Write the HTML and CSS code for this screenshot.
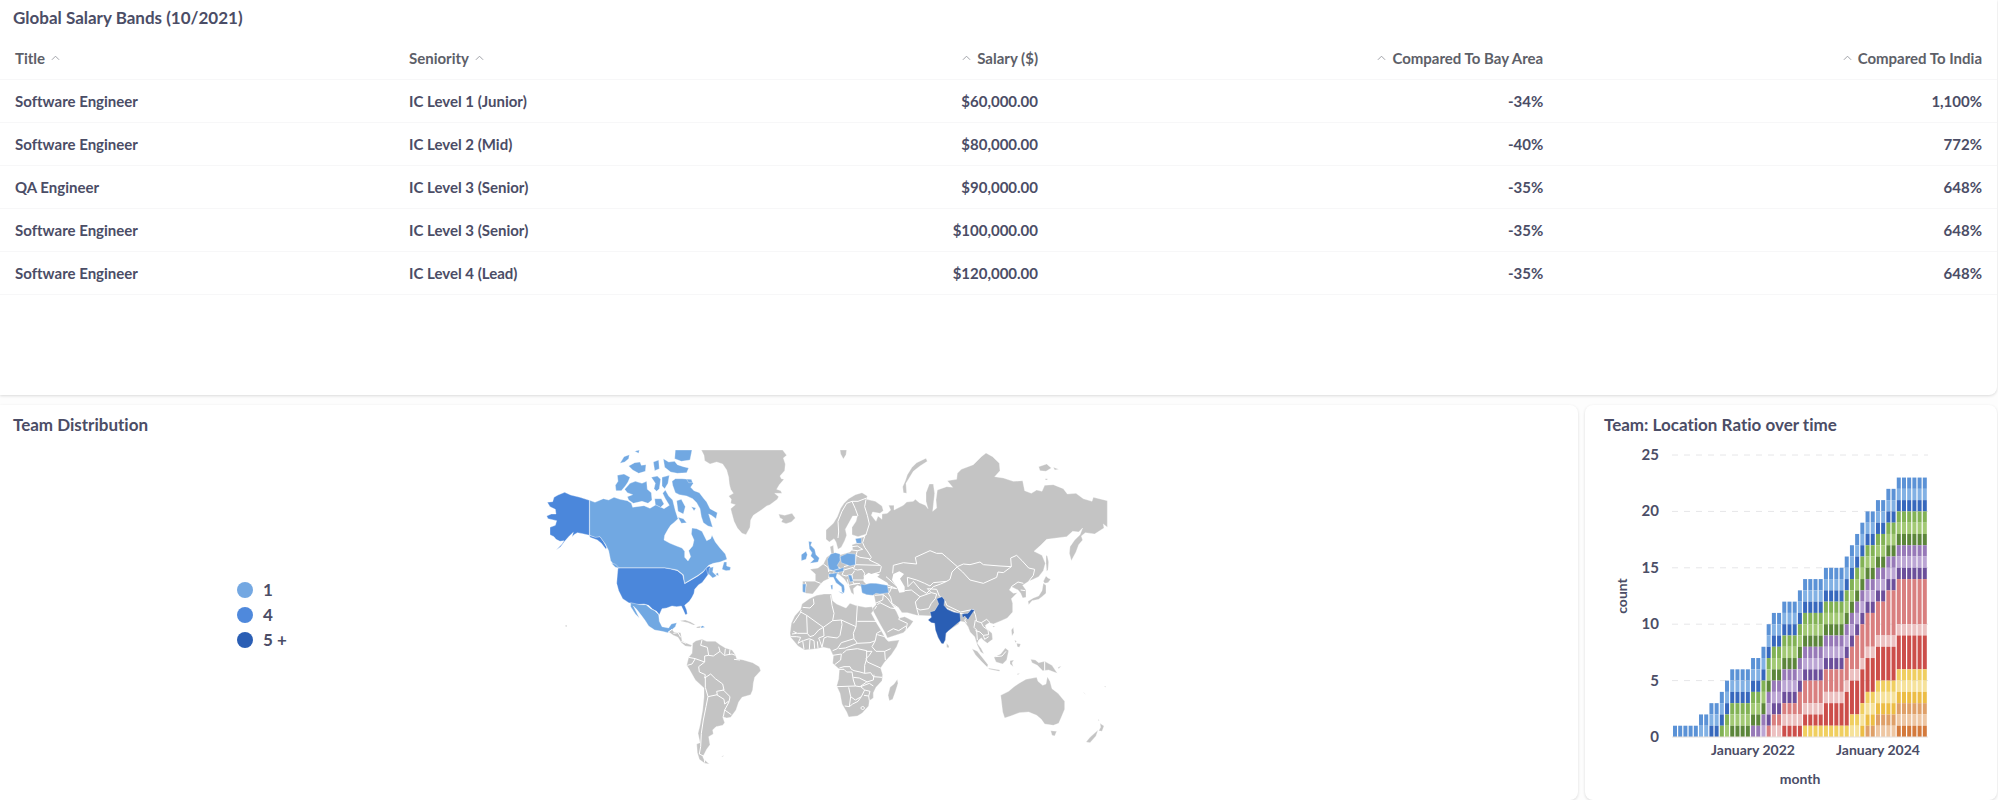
FILE: index.html
```html
<!DOCTYPE html>
<html lang="en">
<head>
<meta charset="utf-8">
<title>Team dashboard</title>
<link rel="stylesheet" href="styles.css">
</head>
<body>
<main class="dashboard">
  <section class="card card-salary">
    <h2 class="card-title">Global Salary Bands (10/2021)</h2>
    <table class="bands">
      <colgroup><col class="col-title"><col class="col-seniority"><col class="col-salary"><col class="col-bay"><col class="col-india"></colgroup>
      <thead>
        <tr>
          <th scope="col"><button class="sort" type="button">Title<svg class="caret" viewBox="0 0 10 6" aria-hidden="true"><path d="M1 5L5 1L9 5"/></svg></button></th>
          <th scope="col"><button class="sort" type="button">Seniority<svg class="caret" viewBox="0 0 10 6" aria-hidden="true"><path d="M1 5L5 1L9 5"/></svg></button></th>
          <th scope="col" class="num"><button class="sort" type="button"><svg class="caret" viewBox="0 0 10 6" aria-hidden="true"><path d="M1 5L5 1L9 5"/></svg>Salary ($)</button></th>
          <th scope="col" class="num"><button class="sort" type="button"><svg class="caret" viewBox="0 0 10 6" aria-hidden="true"><path d="M1 5L5 1L9 5"/></svg>Compared To Bay Area</button></th>
          <th scope="col" class="num"><button class="sort" type="button"><svg class="caret" viewBox="0 0 10 6" aria-hidden="true"><path d="M1 5L5 1L9 5"/></svg>Compared To India</button></th>
        </tr>
      </thead>
      <tbody>
        <tr><td>Software Engineer</td><td>IC Level 1 (Junior)</td><td class="num">$60,000.00</td><td class="num">-34%</td><td class="num">1,100%</td></tr>
        <tr><td>Software Engineer</td><td>IC Level 2 (Mid)</td><td class="num">$80,000.00</td><td class="num">-40%</td><td class="num">772%</td></tr>
        <tr><td>QA Engineer</td><td>IC Level 3 (Senior)</td><td class="num">$90,000.00</td><td class="num">-35%</td><td class="num">648%</td></tr>
        <tr><td>Software Engineer</td><td>IC Level 3 (Senior)</td><td class="num">$100,000.00</td><td class="num">-35%</td><td class="num">648%</td></tr>
        <tr><td>Software Engineer</td><td>IC Level 4 (Lead)</td><td class="num">$120,000.00</td><td class="num">-35%</td><td class="num">648%</td></tr>
      </tbody>
    </table>
  </section>

  <div class="row">
    <section class="card card-map">
      <h2 class="card-title">Team Distribution</h2>
      <div class="map-body">
        <ul class="legend">
          <li><span class="dot level-1"></span>1</li>
          <li><span class="dot level-4"></span>4</li>
          <li><span class="dot level-5"></span>5 +</li>
        </ul>
        <svg class="map" viewBox="0 0 1710 972" role="img" aria-label="World map of team members">
          <!-- North America -->
          <g class="country level-4">
            <path d="M22 187L38 185L42 172L54 165L74 157L92 165L120 172L148 181V286L128 281L112 278L102 284L96 291L100 277L88 288L74 304L62 320L48 330L66 312L72 302L60 304L48 298L42 290L30 284L30 262L46 256L50 242L24 236L20 228L34 222L48 222L46 208L30 200Z"/>
            <path d="M148 286L166 291L180 290L190 304L200 322L198 328L184 310L172 300L150 292Z"/>
            <path d="M234 384H374L392 387L412 392L428 405L434 431L450 422L474 408L490 396L498 384L506 380L504 404L494 418L486 428L476 434L464 448L462 460L456 472L448 484L434 496L440 510L442 522L436 524L430 510L424 498L410 500L396 498L380 504L366 506L358 524L350 514L338 508L326 496L312 492L290 494L266 488L248 476L236 452L230 430L232 404Z"/>
            <path d="M498 384L508 378L518 390L504 404Z"/>
          </g>
          <g class="country level-1">
            <path d="M149 181L165 187L190 176L206 180L222 172L240 178L262 182L274 190L278 202L290 200L312 197L330 205L348 194L372 206L388 196L376 176L368 160L376 150L386 168L398 180L406 212L414 236L404 246L392 256L384 268L374 286L372 300L390 310L410 318L426 324L434 334L434 352L444 363L452 350L446 332L458 318L462 300L454 282L456 264L470 266L486 274L494 290L500 302L512 296L516 286L526 306L540 324L556 342L561 358L540 366L520 370L506 376L490 394L474 406L450 420L434 430L430 404L412 390L392 386L374 383H236L226 380L212 362L206 332L196 312L180 290L166 292L149 286Z"/>
            <path d="M508 384L520 380L518 396L530 408L518 414L506 402ZM536 408L526 402L534 398ZM546 388L552 366L560 366L560 378L572 382L570 391L558 392ZM214 370L226 372L238 384L226 382Z"/>
            <path d="M228 152L226 136L234 124L232 106L252 102L270 112L264 126L256 138L244 152Z"/>
            <path d="M254 148L270 130L286 124L306 130L320 124L322 148L334 158L336 180L324 190L306 184L280 190L266 180L262 170L278 164L262 158Z"/>
            <path d="M240 70L252 50L268 44L266 56L254 66ZM284 34L298 30L296 40ZM266 78L284 68L300 66L304 76L318 74L316 94L296 100L278 90Z"/>
            <path d="M340 66L356 60L358 86L344 92ZM370 56L386 66L404 64L412 74L430 80L446 84L440 98L412 100L392 96L374 82ZM406 30H456L450 60L424 64L404 56Z"/>
            <path d="M334 112L352 108L362 118L358 146L350 154L342 146L346 130ZM366 112L388 106L384 130L374 146L366 138ZM344 176L364 176L372 192L362 202L346 194Z"/>
            <path d="M398 136L396 124L406 116L426 116L448 118L460 130L452 142L462 152L478 158L490 174L500 186L510 206L532 218L528 236L514 226L506 222L518 262L504 258L490 248L484 230L480 206L470 188L458 176L440 168L418 164L406 158Z"/>
            <path d="M410 182L424 178L436 200L430 222L414 214ZM414 232L430 236L440 248L424 250ZM454 200L468 204L462 212Z"/>
            <path d="M440 118H454L458 128L446 128Z"/>
          </g>
          <g transform="translate(0 480)">
            <path class="country level-1" d="M272 8L300 14L318 14L332 26L344 32L356 44L358 64L366 80L386 84L394 72L410 68L406 80L392 92L384 98L366 94L344 90L326 78L316 62L304 46L290 28L280 18L288 34L298 54L286 42L272 20Z"/>
            <path class="country level-1" d="M482 80L488 77L495 82L484 84Z"/>
            <g class="country level-0">
              <path d="M386 96L396 88L402 96L422 98L426 122L440 130L456 136L452 140L436 138L424 128L414 112L400 106Z"/>
              <path d="M420 62L436 60L452 66L466 74L460 75L444 68L424 64ZM472 80L482 78L480 84H468ZM76 76L80 75L81 80L77 80ZM544 470L551 466L549 470Z"/>
              <path d="M458 130L468 122L486 118L500 124L526 124L540 134L556 144L576 150L586 164L590 176L610 180L638 188L658 200L662 212L644 232L640 250L638 270L632 284L606 292L596 306L588 330L572 352L560 354L548 350L554 368L548 376L528 380L518 390L520 402L506 410L510 434L500 448L494 460L488 470L494 480L508 492L494 490L478 478L472 458L470 432L480 428L474 400L480 376L488 330L492 290L492 264L466 240L448 208L440 196L446 172L456 160Z"/>
            </g>
            <path class="borders" d="M384 97L396 88M400 100L414 98L422 112M424 124L438 130M486 120L482 136L502 142L506 166L494 168L494 186L476 200L478 216L496 224L494 234L512 222L526 236L548 252L552 270L530 274L532 284L504 290L496 262L496 230M446 172L466 176L456 192L442 196M466 176L494 186M506 166L520 168L540 154L536 140M540 154L552 166L576 162L586 166M556 146L554 164M570 148L568 164M530 284L552 298L554 312L568 302L570 290L548 268M568 304L554 330L550 350M554 330L574 344M504 290L498 320L490 360L484 400L482 440L478 462L494 470M492 470L494 488M582 178L600 180"/>
          </g>
          <!-- Greenland and Iceland -->
          <g class="country level-0">
            <path d="M484 30H728L740 46L730 54L736 72L734 92L720 108L724 116L732 118L718 134L710 148L722 152L726 160L704 160L716 170L712 178L690 194L680 198L664 210L640 226L632 240L630 262L618 284L606 280L592 264L582 244L576 222L572 206L586 194L572 190L574 178L566 168L580 160L572 148L568 132L566 112L560 90L548 72L530 66L510 72L494 62L492 46Z"/>
            <path d="M716 222L734 226L756 220L766 234L754 246L738 251L724 246L728 238L720 234Z"/>
          </g>
          <!-- Europe and Asia -->
          <g transform="translate(690 0)">
            <g class="country level-0">
              <path d="M168 270L190 250L202 230L212 205L222 190L236 176L256 164L276 158L292 168L290 178L316 184L336 198L340 212L330 220L308 216L304 226L318 244L324 228L336 238L336 222L352 220L362 210L356 196L372 196L372 210L400 196L410 186L430 184L436 178L448 188L466 196L474 206L468 184L468 158L478 132L490 132L494 160L488 214L500 204L498 180L502 150L530 140L548 142L532 122L560 118L562 100L574 88L610 74L634 50L648 39L668 50L688 70L690 92L674 110L700 114L730 124L758 122L764 152L784 160L800 150L816 154L824 136L850 134L880 146L892 162L918 160L940 176L966 184L970 172L1012 182V262L1000 252L1002 264L974 282L946 278L934 288L938 300L926 314L918 336L904 362L898 340L900 320L914 300L930 284L938 264L926 276L908 274L890 290L860 294L830 298L812 316L792 334L816 346L826 370L820 392L806 410L790 418L776 424L758 436L768 450L768 472L758 474L752 460L744 450L736 446L724 440L718 450L730 460L742 458L724 476L728 490L728 516L712 534L694 542L670 552L658 548L646 556L648 564L666 580L668 598L652 610L642 602L634 594L626 600L622 610L634 626L642 642L632 636L622 616L614 590L600 576L594 560L584 546L570 544L566 552L530 576L526 602L516 612L504 594L496 560L486 528L440 526L412 518L396 518L386 504L368 496L380 516L388 534L404 530L412 534L430 544L420 558L400 578L352 594L346 580L330 552L316 526L306 506L318 494L312 466L300 466L278 460L274 440L262 436L250 446L252 464L244 458L236 436L222 416L208 404L190 398L176 416L160 424L152 432L138 450L128 462L108 460L98 452V424L136 424V402L120 388L144 384L160 372L170 352L184 342L180 320L190 316L192 338L212 344L240 336L248 328L246 314L260 310L258 296L284 290L290 282L264 290L246 284L246 262L258 244L262 228L248 228L236 250L226 268L230 286L224 302L214 322L204 328L198 306L192 296L178 306L168 298Z"/>
              <path d="M210 30H230L228 44L220 57L212 42ZM400 158L398 140L406 122L412 104L426 82L440 68L468 55L472 64L450 78L430 94L414 120L408 130L410 160ZM806 80L830 72L844 84L828 94L810 92ZM850 82L866 88L854 90ZM826 116H832V120H826ZM828 346L832 348L836 366L834 390L830 394L828 370ZM820 424L828 408L834 414L842 418L834 428L824 430ZM774 484L790 474L806 468L816 452L820 430L828 436L828 460L816 470L806 478L786 482L776 494ZM724 570L730 562L732 578L726 588ZM530 610L537 618L536 624L530 622Z"/>
            </g>
            <path class="sea" d="M280 424L282 408L296 398L304 402L316 398L330 404L322 410L352 428L356 436L330 436L306 430L288 432ZM370 402L388 394L402 402L390 416L404 440L404 456L388 458L380 440L366 420Z"/>
            <path class="borders" d="M204 294L206 276L204 244L216 214L230 190L246 184L264 184L290 174M264 228L256 206L246 184M288 178L284 200L292 226L298 252L288 284M284 290L278 308L284 322L294 336L304 352L298 360L328 374L334 380L330 396L316 400M260 310L274 308M246 320L262 318L278 328L262 332L258 346M246 330L262 332M258 346L270 352L298 356L298 360M258 346L256 374L250 386L262 390L276 388L284 400L282 410M256 374L330 376M160 372L174 382L176 396M180 398L176 414M136 424L152 430M106 426L108 434L104 458M204 382L222 390L250 382M222 392L216 404L228 408L246 404L254 392M246 404L248 420L282 420M248 424L252 432L270 430M232 418L236 436L262 430M174 390L204 394L206 400M222 380L236 376M348 410L378 436M346 432L380 446L354 442M358 458L366 440M368 400L370 376L400 368L440 372L436 352L480 332L500 340L516 340L530 352L562 380L546 396L540 418L530 424L490 428L480 438L464 430L440 420L412 412L414 440L430 424L450 448L470 460L490 440L512 432L530 424M562 380L580 372L600 374L630 366L640 374L690 378L724 380L700 398L684 396L680 412L640 430L600 420L578 396L562 382M724 380L722 354L740 346L756 362L776 384L794 388L790 406L776 424M724 440L744 426L760 430M752 450L766 452M404 452L424 450L450 470L436 486L440 504L446 526M450 470L484 458L500 462L496 476L484 490L476 506L450 510L440 504M484 458L472 446L500 448L508 468M508 468L526 484L530 496L572 516L610 508L616 524L620 544L634 548L650 538L660 548M596 528L584 540L590 550M528 504L566 520M570 520L582 522M616 540L612 562L620 570L622 600M634 548L640 560L654 570L656 584L640 586L630 576L616 572M640 586L644 598L656 590M354 458L362 472L366 490L386 504M314 466L340 464L352 474L370 498M340 464L338 480L316 490M322 494L330 488L362 504L376 506M320 498L314 508M392 528L386 538L412 550L408 570M352 576L370 566L386 572L408 558"/>
            <g class="country level-1">
              <path d="M116 304L126 306L122 316L134 328L138 344L148 354L144 366L120 370L132 358L122 348L126 338L118 326ZM94 344L108 334L112 344L108 358L94 362ZM256 296L274 294V310H260ZM172 358L182 342L196 338L210 342L210 362L202 376L208 386L190 392L178 388L174 374ZM210 350L232 340L256 342L256 374L240 378L214 368ZM190 392L222 382L220 394L200 398ZM176 402L202 398L198 412L208 424L222 436L224 448L222 460L216 456L214 440L198 428L190 412L178 412ZM182 436L188 434V448H184ZM204 454L218 458V462ZM234 404L244 406L250 424L240 426ZM98 432L108 432L106 458L98 456ZM272 432L284 434L300 430L318 430L352 436L356 458L330 462L318 460L308 466L290 464L276 458Z"/>
            </g>
            <path class="country level-5" d="M500 476L516 470L524 480L522 496L532 508L550 516L570 520L572 542L560 552L534 574L528 580L526 600L520 612L514 610L504 592L496 570L494 550L484 548L474 540L484 532L480 516L494 512L506 492ZM576 522L594 520L604 508L614 510L604 524L594 540L584 528L578 534Z"/>
          </g>
          <!-- Africa and Oceania -->
          <g transform="translate(690 420)">
            <g class="country level-0">
              <path d="M118 56L140 46L162 42L184 42L188 62L200 72L228 84L240 70L256 76L286 82L306 80L310 92L304 100L318 126L334 152L346 174L356 184L388 180L380 200L364 224L344 246L332 264L338 284L336 302L318 322L310 338L310 354L298 362L296 378L276 400L262 408L236 411L230 396L216 372L210 340L200 318L206 296L208 268L188 250L190 228L180 206L160 202L140 206L104 210L84 198L62 172L60 160L64 130L74 108L92 88L96 72Z"/>
              <path d="M382 298L384 310L376 336L368 358L358 362L354 346L360 322L372 312ZM692 346L716 334L732 320L750 308L768 298L800 292L804 304L818 316L828 312L832 290L840 304L846 326L864 340L884 364L884 388L874 412L866 430L850 436L824 432L814 418L800 406L776 396L748 398L722 408L704 414L698 396ZM842 452L860 454L854 468L846 466ZM990 430L1002 438L996 454L986 452L992 442ZM984 450L978 468L960 488L948 486L960 472ZM606 206L622 214L640 236L654 254L652 262L634 244L616 224ZM654 264L690 270L688 274L658 268ZM672 232L692 222L706 204L716 212L710 240L698 252L678 246ZM720 242L732 240L726 248L730 260L720 252ZM782 238L796 240L806 248L824 244L846 256L862 280L836 270L818 272L802 256L786 248ZM740 190L752 192L748 202L742 200ZM734 180L740 184L736 188ZM668 138H676L670 142ZM740 282L750 280L744 284ZM864 262L874 258L866 266ZM940 336L948 344L942 340ZM1002 320L1008 318L1006 322ZM984 418L988 420L986 424Z"/>
            </g>
            <path class="borders" d="M98 82L120 84L132 72L130 56M94 90L90 100L70 130M92 96L110 106L160 142L188 122L192 100L186 76L182 46M110 106L112 160L82 160L70 154M112 160L120 170L132 166L146 150L160 142L162 168L146 174L150 184M188 122L214 120L216 134L210 166L202 174L172 170L162 174M214 120L258 140L262 76M262 124H318M258 140L250 160L252 176L214 188L202 206L188 212M252 176L262 190L300 188L316 182L320 160L334 152M316 182L306 200L318 214L344 214L362 206M322 164L344 170L356 184M344 214L346 240M306 214L298 226L288 236L292 246L332 264M206 206L226 204L262 190M188 226L214 222L212 240L194 254M218 220L230 210L262 206L290 212L290 236L284 256L284 280L270 276L252 272L244 268L240 260L222 260L208 264M288 214L306 214M284 280L302 278L310 290L336 292M206 268L222 268L230 276L246 276L250 300L256 318L200 320M256 318L270 320L290 306L310 300L312 284M250 292L268 294L292 306M236 322L242 350L238 380L224 378M242 350L256 360L274 350L284 330L272 320M272 320L298 310L310 318M284 330L300 334L296 348L282 346M296 348L298 362M238 380L248 372L264 364L274 350M62 170H80L92 172L84 190L98 182L102 208M100 182L118 176L132 182L134 206M118 208L120 178M144 204L142 184M150 184L156 202M162 174L156 202M272 384L278 378L284 384L278 390ZM66 162L80 160M824 244V272M676 230L696 228L708 214"/>
          </g>
        </svg>
      </div>
    </section>

    <section class="card card-chart">
      <h2 class="card-title">Team: Location Ratio over time</h2>
      <svg id="chart" class="chart" viewBox="0 0 412 360" role="img" aria-label="Team location ratio over time"></svg>
    </section>
  </div>
</main>
<script src="chart.js"></script>
</body>
</html>
```
FILE: styles.css
```css
* { box-sizing: border-box; }

body {
  margin: 0;
  background: #fdfdfd;
  color: #4b4d66;
  font-family: Lato, "Liberation Sans", sans-serif;
  font-size: 14px;
  font-weight: 700;
  font-variant-ligatures: none;
}

.dashboard {
  display: flex;
  flex-direction: column;
  gap: 10px;
  min-height: 100vh;
  padding-right: 1px;
}

.card {
  background: #fff;
  border-radius: 8px;
  box-shadow: 0 1px 3px rgba(0, 0, 0, 0.14);
}

.card-salary {
  min-height: 395px;
  border-top-left-radius: 0;
  border-top-right-radius: 0;
  border-bottom-left-radius: 0;
}

.card-title {
  margin: 0;
  padding: 8px 13px 0;
  font-size: 17px;
  line-height: 20px;
  font-weight: 700;
}

.bands {
  width: 100%;
  margin-top: 8px;
  border-collapse: collapse;
  table-layout: fixed;
}

.col-title { width: 394px; }
.col-seniority { width: 16%; }
.col-salary { width: 17%; }
.col-bay { width: 25.3%; }

.bands th,
.bands td {
  height: 43px;
  padding: 0 15px;
  border-bottom: 1px solid #f7f7f8;
  font-size: 15px;
  text-align: left;
}

.bands th { color: #5d6068; }

.bands .num { text-align: right; }

.sort {
  display: inline-flex;
  align-items: center;
  gap: 6px;
  padding: 0;
  border: 0;
  background: none;
  color: inherit;
  font: inherit;
  vertical-align: middle;
}

.caret {
  width: 9px;
  height: 6px;
  fill: none;
  stroke: #96999f;
  stroke-width: 1;
}

.row {
  display: grid;
  grid-template-columns: 1578fr 412fr;
  gap: 7px;
  flex: 1;
}

.card-map {
  border-top-left-radius: 0;
  border-bottom-left-radius: 0;
}

.row .card-title { padding-top: 10px; }
.card-chart .card-title { padding-left: 19px; }

.map-body {
  display: flex;
  align-items: center;
  gap: 255px;
  padding: 5px 0 0 237px;
}

.legend {
  display: flex;
  flex-direction: column;
  gap: 5px;
  width: 48px;
  margin: 26px 0 0;
  padding: 0;
  list-style: none;
  font-size: 17px;
  line-height: 20px;
  white-space: nowrap;
}

.legend li {
  display: flex;
  align-items: center;
  gap: 10px;
}

.dot {
  flex: none;
  width: 16px;
  height: 16px;
  border-radius: 50%;
}

.dot.level-1 { background: #74a8e2; }
.dot.level-4 { background: #4f89dc; }
.dot.level-5 { background: #2a5eb4; }

.map {
  width: 570px;
  height: auto;
}

.country {
  stroke: #fff;
  stroke-width: 1;
  stroke-linejoin: round;
}

.country.level-0 { fill: #c4c4c4; }
.country.level-1 { fill: #71a8e2; }
.country.level-4 { fill: #4b87db; }
.country.level-5 { fill: #2a5eb4; }

.sea { fill: #fff; }

.borders {
  fill: none;
  stroke: #fff;
  stroke-width: 3;
  stroke-linejoin: round;
}

.chart {
  display: block;
  width: 100%;
  height: auto;
  margin-top: 5px;
}

.chart text {
  fill: #4b4d66;
  font-size: 14px;
}

.chart .tick { font-size: 15px; }

.chart .grid {
  stroke: #e6e6e8;
  stroke-dasharray: 6 6;
}

.chart .axis { stroke: #e6e0dc; }
```
FILE: chart.js
```js
const svgNS = "http://www.w3.org/2000/svg";
const chart = document.getElementById("chart");

const colors = [
  "#5b92d6", "#82b1e4", "#3768bd",
  "#82b255", "#a2c974", "#5c863a",
  "#9779b8", "#bba5d4", "#6c4f9b",
  "#d97f7f", "#ecc0c0", "#cc4e4a",
  "#f0cf60", "#f6e29a", "#ecbd45",
  "#dfa068", "#eec6a2", "#d47a3c"
];

// [number of months, total, salmon count, red count]
const steps = [
  [5, 1, 1, 1], [2, 2, 1, 1], [2, 3, 1, 1], [1, 4, 1, 1], [1, 5, 1, 1],
  [4, 6, 1, 1], [2, 7, 1, 1], [1, 8, 1, 1], [1, 10, 1, 1], [2, 11, 1, 1],
  [3, 12, 1, 1], [1, 13, 2, 1], [4, 14, 2, 1], [4, 15, 2, 2], [1, 16, 2, 3],
  [1, 17, 2, 3], [1, 18, 3, 3], [1, 19, 3, 3], [2, 20, 3, 3], [2, 21, 3, 3],
  [2, 22, 4, 3], [6, 23, 4, 3]
];

const left = 87;
const right = 343;
const base = 297;
const unit = 282 / 25;

function add(name, attrs, text) {
  const el = document.createElementNS(svgNS, name);
  for (const key in attrs) el.setAttribute(key, attrs[key]);
  if (text) el.textContent = text;
  chart.appendChild(el);
}

for (let v = 0; v <= 25; v += 5) {
  const y = base - v * unit;
  if (v) add("line", { class: "grid", x1: left, x2: right, y1: y, y2: y });
  add("text", { class: "tick", x: 74, y: y + 5, "text-anchor": "end" }, String(v));
}

const months = steps.reduce((sum, s) => sum + s[0], 0);
const pitch = (right - left - 1) / months;
let column = 0;
for (const [repeat, total, salmon, red] of steps) {
  for (let i = 0; i < repeat; i++, column++) {
    let level = total;
    for (let c = 0; level > 0; c++) {
      const size = c === 9 ? salmon : c === 11 ? red : 1;
      add("rect", {
        x: left + 1 + column * pitch,
        y: base - level * unit,
        width: 4,
        height: size * unit,
        fill: colors[c]
      });
      level -= size;
    }
  }
}

add("line", { class: "axis", x1: left, x2: right, y1: base, y2: base });
add("text", { x: 168, y: 315, "text-anchor": "middle" }, "January 2022");
add("text", { x: 293, y: 315, "text-anchor": "middle" }, "January 2024");
add("text", { x: 215, y: 344, "text-anchor": "middle" }, "month");
add("text", { transform: "translate(42 156) rotate(-90)", "text-anchor": "middle" }, "count");
```
